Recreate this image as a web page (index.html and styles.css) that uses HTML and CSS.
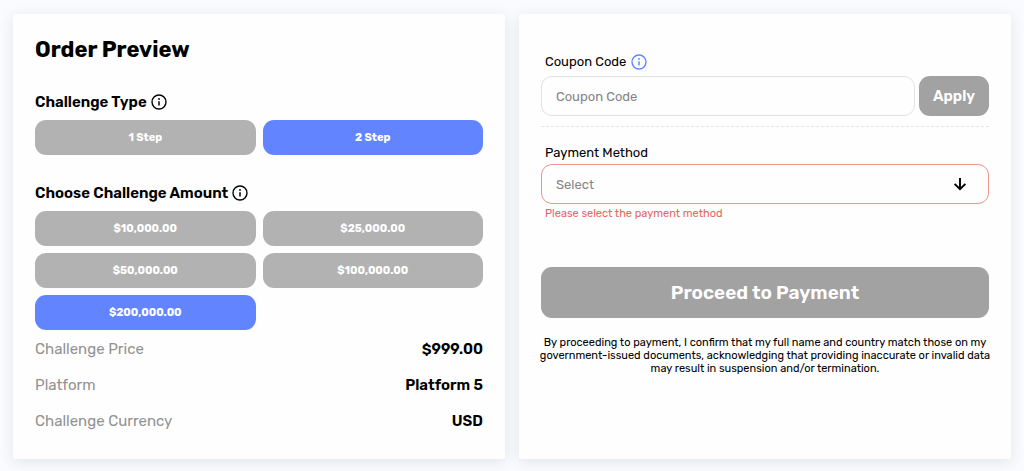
FILE: index.html
```html
<!DOCTYPE html>
<html lang="en">
<head>
<meta charset="utf-8">
<meta name="viewport" content="width=device-width, initial-scale=1">
<title>Order Preview</title>
<link rel="stylesheet" href="styles.css">
</head>
<body>
<svg class="sprite" aria-hidden="true">
  <symbol id="info" viewBox="0 0 16 16">
    <circle cx="8" cy="8" r="7" fill="none" stroke="currentColor" stroke-width="1.4"/>
    <path d="M8 7.2v4.3" stroke="currentColor" stroke-width="1.5"/>
    <circle cx="8" cy="5" r="0.9" fill="currentColor"/>
  </symbol>
</svg>
<main class="page">
  <section class="card">
    <h1 class="title">Order Preview</h1>
    <h2 class="heading">Challenge Type <svg class="info"><use href="#info"/></svg></h2>
    <div class="options">
      <button type="button" class="option">1 Step</button>
      <button type="button" class="option selected">2 Step</button>
    </div>
    <h2 class="heading amount">Choose Challenge Amount <svg class="info"><use href="#info"/></svg></h2>
    <div class="options">
      <button type="button" class="option">$10,000.00</button>
      <button type="button" class="option">$25,000.00</button>
      <button type="button" class="option">$50,000.00</button>
      <button type="button" class="option">$100,000.00</button>
      <button type="button" class="option selected">$200,000.00</button>
    </div>
    <dl class="summary">
      <div class="row"><dt>Challenge Price</dt><dd>$999.00</dd></div>
      <div class="row"><dt>Platform</dt><dd>Platform 5</dd></div>
      <div class="row"><dt>Challenge Currency</dt><dd>USD</dd></div>
    </dl>
  </section>
  <form class="card payment">
    <div class="label-line">
      <label for="coupon">Coupon Code</label>
      <svg class="info blue"><use href="#info"/></svg>
    </div>
    <div class="coupon">
      <input class="field" id="coupon" type="text" placeholder="Coupon Code">
      <button type="button" class="apply">Apply</button>
    </div>
    <hr class="divider">
    <div class="label-line"><label for="method">Payment Method</label></div>
    <div class="select">
      <select class="field invalid" id="method" aria-describedby="method-error"><option>Select</option></select>
      <svg class="arrow" viewBox="0 0 14 14" aria-hidden="true"><path d="M7 1v11M1.600 6.800 7 12.200l5.400-5.400" fill="none" stroke="currentColor" stroke-width="1.900"/></svg>
    </div>
    <p class="error" id="method-error">Please select the payment method</p>
    <button type="button" class="proceed">Proceed to Payment</button>
    <p class="terms">By proceeding to payment, I confirm that my full name and country match those on my government-issued documents, acknowledging that providing inaccurate or invalid data may result in suspension and/or termination.</p>
  </form>
</main>
</body>
</html>
```
FILE: styles.css
```css
* { box-sizing: border-box; }

body {
  margin: 0;
  background: #f9fbfe;
  color: #000;
  font-family: Rubik, Roboto, sans-serif;
}

button, input, select { font: inherit; }
h1, h2, p, dl, dd { margin: 0; }
.sprite { display: none; }

.page {
  display: grid;
  grid-template-columns: 1fr 1fr;
  gap: 14px;
  padding: 14px 13px 12px;
}

.card {
  padding: 22px 22px 20px;
  border-radius: 3px;
  background: #fefefe;
  box-shadow: 0 3px 14px rgba(60, 65, 90, 0.12);
}

.title {
  font-size: 22px;
  font-weight: 700;
  line-height: 28px;
}

.heading {
  display: flex;
  align-items: center;
  gap: 4px;
  margin: 28px 0 8px;
  font-size: 15px;
  font-weight: 600;
  line-height: 20px;
}

.info {
  flex: none;
  width: 16px;
  height: 16px;
}

.blue { color: #6285ff; }

.options {
  display: grid;
  grid-template-columns: 1fr 1fr;
  gap: 7px;
}

.option {
  height: 35px;
  padding: 0;
  border: 0;
  border-radius: 11px;
  background: #b2b2b2;
  color: #fff;
  font-size: 11px;
  font-weight: 700;
}

.selected { background: #6285ff; }

.summary { margin-top: 1px; }

.row {
  display: flex;
  justify-content: space-between;
  font-size: 15px;
  line-height: 36px;
}

.row dt { color: #929292; }
.row dd { font-weight: 600; }

.payment { padding-top: 38px; }

.label-line {
  display: flex;
  align-items: center;
  gap: 5px;
  padding-left: 4px;
  font-size: 13px;
  line-height: 20px;
}

.coupon {
  display: flex;
  gap: 4px;
  margin-top: 4px;
}

.field {
  display: block;
  flex: 1;
  width: 100%;
  min-width: 0;
  height: 40px;
  padding: 0 14px;
  border: 1px solid #e3e3e3;
  border-radius: 11px;
  outline: 0;
  background: #fefefe;
  color: #858585;
  font-size: 13px;
}

.field::placeholder { color: #858585; }

.invalid {
  appearance: none;
  border-color: #f0938c;
}

.apply {
  width: 70px;
  height: 40px;
  padding: 0;
  border: 0;
  border-radius: 11px;
  background: #a2a2a2;
  color: #fff;
  font-size: 15px;
  font-weight: 600;
}

.divider {
  margin: 10px 0 16px;
  border: 0;
  border-top: 1px dashed #e6e6e6;
}

.select {
  position: relative;
  margin-top: 1px;
}

.arrow {
  position: absolute;
  top: 13px;
  right: 22px;
  width: 14px;
  height: 14px;
  pointer-events: none;
}

.error {
  padding-left: 4px;
  color: #e9655d;
  font-size: 11px;
  line-height: 20px;
}

.proceed {
  width: 100%;
  height: 51px;
  margin: 43px 0 18px;
  padding: 0;
  border: 0;
  border-radius: 11px;
  background: #a2a2a2;
  color: #fff;
  font-size: 19px;
  font-weight: 600;
}

.terms {
  margin: 0 -4px;
  font-size: 11px;
  line-height: 13px;
  text-align: center;
}
```
